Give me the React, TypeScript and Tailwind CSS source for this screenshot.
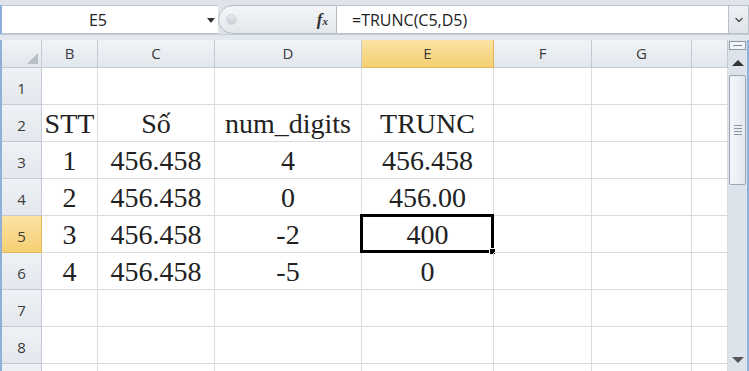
import { ChevronDown } from "lucide-react";

interface Col {
  key: string;
  width: string;
}

const columns: Col[] = [
  { key: "B", width: "w-[56px]" },
  { key: "C", width: "w-[117px]" },
  { key: "D", width: "w-[147px]" },
  { key: "E", width: "w-[132px]" },
  { key: "F", width: "w-[98px]" },
  { key: "G", width: "w-[100px]" },
  { key: "", width: "w-[36px]" },
];

const rows: string[][] = [
  [],
  ["STT", "Số", "num_digits", "TRUNC"],
  ["1", "456.458", "4", "456.458"],
  ["2", "456.458", "0", "456.00"],
  ["3", "456.458", "-2", "400"],
  ["4", "456.458", "-5", "0"],
  [],
  [],
  [],
];

const FormulaBar = () => (
  <div className="h-[40px] bg-[#dfe4eb] flex flex-col">
    <div className="h-[5px]" />
    <div className="h-[29px] flex border-l-2 border-[#8fb0d8]">
      {/* name box */}
      <div className="w-[216px] bg-white border-y border-[#b9c2cc] relative flex items-center">
        <span className="w-[192px] text-center text-[16px] text-[#222] font-['Open_Sans',sans-serif]">E5</span>
        <span className="absolute left-[205px] top-[12px] w-0 h-0 border-x-[4px] border-x-transparent border-t-[5px] border-t-[#333]" />
      </div>
      {/* pill with fx */}
      <div className="w-[119px] bg-gradient-to-b from-[#f4f6f8] to-[#e3e7ec] border border-[#b4bcc6] rounded-l-[15px] flex items-center justify-between pl-[7px] pr-[8px]">
        <span className="w-[11px] h-[11px] rounded-full bg-gradient-to-b from-[#e6e9ed] to-[#c9ced5] border border-[#d2d7dd]" />
        <span className="font-['Liberation_Serif',serif] italic font-bold text-[17px] text-[#333] leading-none">
          f<span className="text-[11px]">x</span>
        </span>
      </div>
      {/* formula */}
      <div className="flex-1 bg-white border-y border-[#b9c2cc] flex items-center pl-[15px] text-[16px] text-[#222] font-['Open_Sans',sans-serif]">
        =TRUNC(C5,D5)
      </div>
      {/* expand */}
      <div className="w-[21px] bg-gradient-to-b from-[#eef1f4] to-[#dfe4ea] border border-[#b9c2cc] flex items-center justify-center text-[#555]">
        <ChevronDown size={12} strokeWidth={3} />
      </div>
    </div>
    <div className="h-[6px] border-t border-[#c5ccd5] bg-[#e3e8ee]" />
  </div>
);

const ScrollBar = () => (
  <div className="w-[21px] bg-[#dce3eb] border-r-2 border-[#8fb0d8] flex flex-col items-center pt-[1px]">
    <div className="w-[17px] h-[9px] border border-[#8e9aa8] bg-[#f3f5f8] flex items-center justify-center">
      <span className="w-[9px] h-[1px] bg-[#7d8896]" />
    </div>
    <div className="h-[25px] flex items-center justify-center">
      <span className="w-0 h-0 border-x-[6px] border-x-transparent border-b-[6px] border-b-[#333]" />
    </div>
    <div className="w-[17px] h-[110px] border border-[#9aa6b4] rounded-[2px] bg-gradient-to-r from-[#f4f6f9] to-[#e4e9ef] flex flex-col items-center justify-center gap-[2px]">
      <span className="w-[8px] h-[1px] bg-[#8a95a3]" />
      <span className="w-[8px] h-[1px] bg-[#8a95a3]" />
      <span className="w-[8px] h-[1px] bg-[#8a95a3]" />
      <span className="w-[8px] h-[1px] bg-[#8a95a3]" />
    </div>
    <div className="flex-1" />
    <div className="h-[14px] flex items-start justify-center">
      <span className="w-0 h-0 border-x-[6px] border-x-transparent border-t-[6px] border-t-[#555]" />
    </div>
  </div>
);

const App = () => {
  return (
    <div className="w-[749px] h-[371px] overflow-hidden bg-white font-['Open_Sans',sans-serif]">
      <FormulaBar />
      <div className="flex h-[331px]">
        <div className="w-[728px] border-l-2 border-[#8fb0d8] flex flex-col">
          {/* column headers */}
          <div className="flex h-[28px] shrink-0">
            <div className="w-[40px] bg-gradient-to-b from-[#f1f4f7] to-[#e2e7ed] border-r border-b border-[#c3cad3] relative">
              <span className="absolute right-[3px] bottom-[3px] w-0 h-0 border-l-[11px] border-l-transparent border-b-[11px] border-b-[#b8bec6]" />
            </div>
            {columns.map((c) => (
              <div
                key={c.key || "h"}
                className={
                  c.width +
                  (c.key === "E"
                    ? " bg-gradient-to-b from-[#fbe3a3] to-[#f5cf72] border-[#e3b856]"
                    : " bg-gradient-to-b from-[#f1f4f7] to-[#e2e7ed] border-[#c3cad3]") +
                  " border-r border-b flex items-center justify-center text-[15px] text-[#3a3a3a]"
                }
              >
                {c.key}
              </div>
            ))}
          </div>
          {/* rows */}
          {rows.map((r, i) => (
            <div key={i} className="flex h-[37px] shrink-0">
              <div
                className={
                  (i === 4
                    ? "bg-gradient-to-b from-[#fbe3a3] to-[#f5cf72] border-[#e3b856]"
                    : "bg-gradient-to-b from-[#eef1f5] to-[#e4e8ee] border-[#c3cad3]") +
                  " w-[40px] border-r border-b flex items-center justify-center pt-[4px] text-[15px] text-[#3a3a3a]"
                }
              >
                {i < 8 ? i + 1 : ""}
              </div>
              {columns.map((c, j) => (
                <div
                  key={j}
                  className={
                    c.width +
                    " relative border-r border-b border-[#dadcdf] flex items-end justify-center pb-[2px] leading-[30px] text-[28px] text-[#222] font-['Liberation_Serif',serif]"
                  }
                >
                  {r[j] ?? ""}
                  {i === 4 && c.key === "E" && (
                    <span className="absolute -left-[2px] -top-[2px] -right-[1px] -bottom-[1px] border-[3px] border-black">
                      <span className="absolute -right-[5px] -bottom-[5px] w-[7px] h-[7px] bg-black border border-white" />
                    </span>
                  )}
                </div>
              ))}
            </div>
          ))}
        </div>
        <ScrollBar />
      </div>
    </div>
  );
};

export default App;
